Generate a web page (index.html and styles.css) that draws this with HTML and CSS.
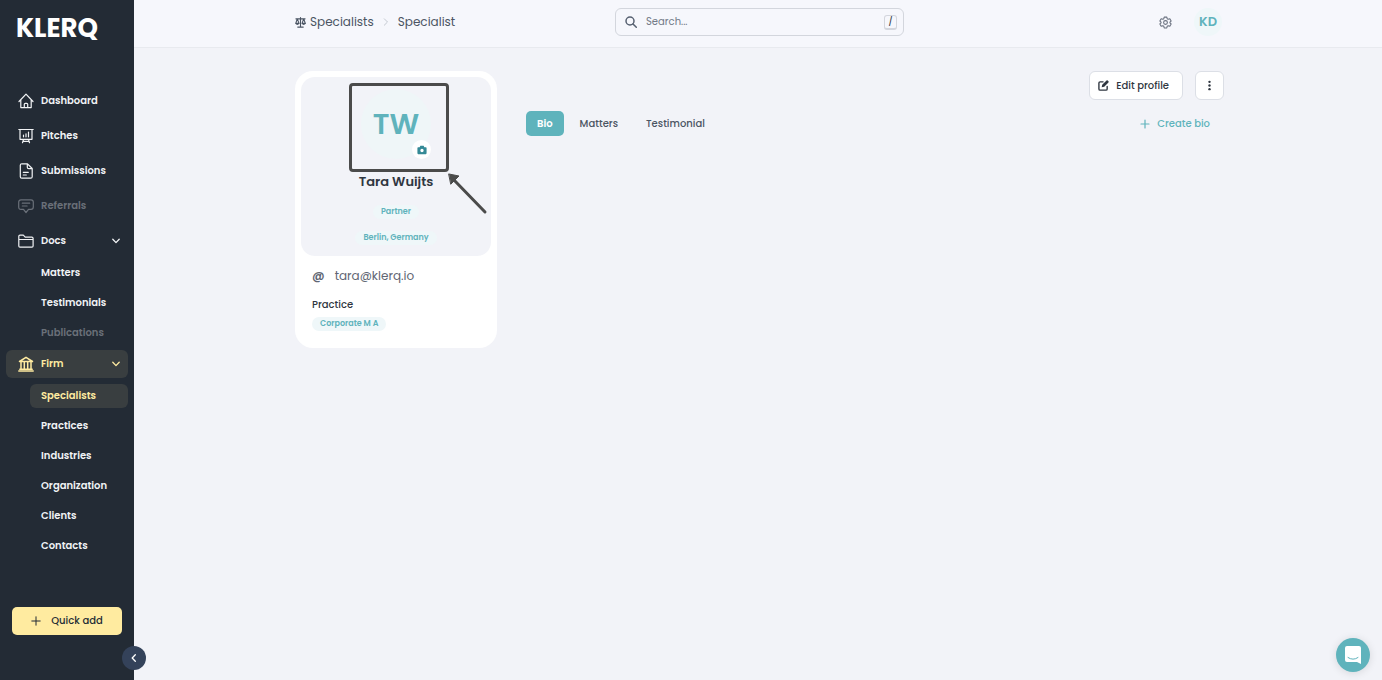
FILE: index.html
```html
<!DOCTYPE html>
<html lang="en">

<head>
    <meta charset="utf-8">
    <meta name="viewport" content="width=device-width, initial-scale=1.0">
    <title>Klerq - Specialist</title>
    <link rel="stylesheet" href="styles.css">
</head>

<body>
    <aside class="sidebar">
        <a class="logo" href="#">KLERQ</a>

        <nav class="menu">
            <a class="menu-item" href="#">
                <svg class="icon" viewBox="0 0 16 16"><path d="M1 8.5 8 1.2l7 7.3M2.8 7v7.6h10.4V7M6.3 14.5v-3.2q0-1 1-1h1.4q1 0 1 1v3.2" /></svg>
                Dashboard
            </a>
            <a class="menu-item" href="#">
                <svg class="icon" viewBox="0 0 16 16"><path d="M.8 1.5h14.4M2 1.5v9.8h12V1.5M5.5 8.8V7.2M8 8.8V5.8M10.5 8.8V4M5.5 11.5l-1 3.2M10.5 11.5l1 3.2M5 13.3h6" /></svg>
                Pitches
            </a>
            <a class="menu-item" href="#">
                <svg class="icon" viewBox="0 0 16 16"><path d="M3.8.8h5.7l4.7 4.7v8.2q0 1.5-1.5 1.5H3.8q-1.5 0-1.5-1.5V2.3Q2.3.8 3.8.8zM9.3.8v3.4q0 1.5 1.5 1.5h3.4M5.3 9.3h5M5.3 12h3" /></svg>
                Submissions
            </a>
            <a class="menu-item muted" href="#">
                <svg class="icon" viewBox="0 0 16 16"><path d="M3 1.8h10q2.3 0 2.3 2.3v5q0 2.3-2.3 2.3h-2.5L8 14.5l-2.5-3.1H3Q.7 11.4.7 9.1v-5Q.7 1.8 3 1.8zM4.3 5.2h7.4M4.3 8h4.8" /></svg>
                Referrals
            </a>

            <button class="menu-item" type="button">
                <svg class="icon" viewBox="0 0 16 16"><path d="M.8 13V3.3q0-1.2 1.2-1.2h3.3l1.9 2h6.6q1.3 0 1.3 1.3V13q0 1.2-1.2 1.2H2Q.8 14.2.8 13zM.8 6.5h14.3" /></svg>
                Docs
                <svg class="chevron" viewBox="0 0 8 8"><path d="M.8 2.3 4 5.6l3.2-3.3" /></svg>
            </button>
            <ul class="submenu">
                <li><a href="#">Matters</a></li>
                <li><a href="#">Testimonials</a></li>
                <li><a class="muted" href="#">Publications</a></li>
            </ul>

            <button class="menu-item active" type="button">
                <svg class="icon firm-icon" viewBox="0 0 16 16"><path d="M1.5 5.5 8 1.3l6.5 4.2zM3 6v7M6.3 6v7M9.7 6v7M13 6v7M1.8 13.2h12.4M.8 15h14.4" /></svg>
                Firm
                <svg class="chevron" viewBox="0 0 8 8"><path d="M.8 2.3 4 5.6l3.2-3.3" /></svg>
            </button>
            <ul class="submenu">
                <li><a class="active" href="#">Specialists</a></li>
                <li><a href="#">Practices</a></li>
                <li><a href="#">Industries</a></li>
                <li><a href="#">Organization</a></li>
                <li><a href="#">Clients</a></li>
                <li><a href="#">Contacts</a></li>
            </ul>
        </nav>

        <button class="quick-add" type="button">
            <svg viewBox="0 0 10 10"><path d="M5 .8v8.4M.8 5h8.4" /></svg>
            Quick add
        </button>
        <button class="collapse" type="button" aria-label="Collapse menu">
            <svg viewBox="0 0 8 8"><path d="M5.3.8 2.2 4l3.1 3.2" /></svg>
        </button>
    </aside>

    <div class="page">
        <header class="topbar">
            <div class="topbar-inner">
                <nav class="breadcrumb">
                    <a href="#">
                        <svg class="scales" viewBox="0 0 12 12"><path d="M1 2h10M6 .6v10.2M3 11h6M2.5 2 .8 7h3.6zM9.5 2 7.7 7h3.6zM.8 7q1.7 2 3.6 0M7.7 7q1.8 2 3.6 0" /></svg>
                        Specialists
                    </a>
                    <svg class="crumb-arrow" viewBox="0 0 8 8"><path d="M2.3.8 5.5 4 2.3 7.2" /></svg>
                    <span>Specialist</span>
                </nav>

                <label class="search">
                    <svg viewBox="0 0 12 12"><circle cx="5" cy="5" r="4" /><path d="m8 8 3.3 3.3" /></svg>
                    <input type="text" placeholder="Search..." aria-label="Search">
                    <kbd>/</kbd>
                </label>

                <div class="account">
                    <button class="settings" type="button" aria-label="Settings">
                        <svg viewBox="0 0 24 24"><path d="M9.6 2h4.8l.7 3 1.9 1.1 3-.9 2.4 4.2-2.2 2.1v1l2.2 2.1-2.4 4.2-3-.9-1.9 1.1-.7 3H9.6l-.7-3L7 17.9l-3 .9-2.4-4.2 2.2-2.1v-1L1.6 9.4 4 5.2l3 .9L8.9 5z" /><circle cx="12" cy="12" r="3.5" /></svg>
                    </button>
                    <button class="user" type="button">KD</button>
                </div>
            </div>
        </header>

        <main class="content">
            <section class="card">
                <div class="card-head">
                    <div class="avatar">
                        TW
                        <button class="camera" type="button" aria-label="Change picture">
                            <svg viewBox="0 0 12 12"><path fill-rule="evenodd" d="M4 1h4l.8 1.7h1.7q1 0 1 1V10q0 1-1 1h-9q-1 0-1-1V3.7q0-1 1-1h1.7zM6 4.6a2 2 0 1 0 0 4 2 2 0 0 0 0-4z" /></svg>
                        </button>
                        <span class="highlight"></span>
                        <svg class="arrow" viewBox="0 0 40 42"><path class="arrow-line" d="M37 39 6 7" /><path class="arrow-tip" d="M1 1l10 2-8 8z" /></svg>
                    </div>
                    <h1>Tara Wuijts</h1>
                    <span class="tag">Partner</span>
                    <span class="tag">Berlin, Germany</span>
                </div>
                <div class="card-body">
                    <a class="email" href="#"><span class="at">@</span>tara@klerq.io</a>
                    <h2>Practice</h2>
                    <span class="tag">Corporate M A</span>
                </div>
            </section>

            <section class="details">
                <div class="actions">
                    <button class="btn edit" type="button">
                        <svg viewBox="0 0 12 12"><path class="stroke" d="M5.5 2H2.3Q1 2 1 3.3v6.4Q1 11 2.3 11h6.4Q10 11 10 9.7V7" /><path d="M9.3.6q.7-.5 1.3 0l.8.8q.6.7 0 1.3L6.8 7.4 4 8l.6-2.8z" /></svg>
                        Edit profile
                    </button>
                    <button class="btn more" type="button" aria-label="More">
                        <svg viewBox="0 0 12 12"><circle cx="6" cy="2" r="1.3" /><circle cx="6" cy="6" r="1.3" /><circle cx="6" cy="10" r="1.3" /></svg>
                    </button>
                </div>
                <div class="tab-row">
                    <button class="tab selected" type="button">Bio</button>
                    <button class="tab" type="button">Matters</button>
                    <button class="tab" type="button">Testimonial</button>
                    <button class="create" type="button">
                        <svg viewBox="0 0 10 10"><path d="M5 1v8M1 5h8" /></svg>
                        Create bio
                    </button>
                </div>
            </section>
        </main>
    </div>

    <button class="chat" type="button" aria-label="Open chat">
        <svg viewBox="0 0 18 20"><path class="bubble" d="M3 1h12q2 0 2 2v16l-4-2H3q-2 0-2-2V3q0-2 2-2z" /><path class="smile" d="M4 12.5q5 3.5 10 0" /></svg>
    </button>
</body>

</html>
```

FILE: styles.css
```css
* {
    box-sizing: border-box;
}

body {
    display: grid;
    grid-template-columns: 134px 1fr;
    min-height: 100vh;
    margin: 0;
    background-color: #f2f3f8;
    color: #2f3640;
    font-family: Poppins, Inter, sans-serif;
    font-size: 10px;
    font-weight: 500;
}

a {
    color: inherit;
    text-decoration: none;
}

button {
    padding: 0;
    border: none;
    background: none;
    color: inherit;
    font: inherit;
    cursor: pointer;
}

svg {
    flex: none;
    fill: none;
    stroke: currentColor;
    stroke-linecap: round;
    stroke-linejoin: round;
}

/* Sidebar */
.sidebar {
    position: relative;
    display: flex;
    flex-direction: column;
    padding: 14px 6px 45px;
    background-color: #232b35;
    color: #f1f3f5;
}

.logo {
    margin-left: 10px;
    color: #fff;
    font-size: 26px;
    font-weight: 700;
    line-height: 28px;
}

.menu {
    display: flex;
    flex-direction: column;
    gap: 7px;
    margin-top: 45px;
    font-weight: 600;
}

.menu-item {
    display: flex;
    align-items: center;
    gap: 7px;
    height: 28px;
    padding: 0 8px 0 12px;
    border-radius: 6px;
}

.icon {
    width: 16px;
    height: 16px;
    stroke-width: 1.2;
}

.firm-icon {
    stroke-width: 1.5;
}

.chevron {
    width: 8px;
    height: 8px;
    margin-left: auto;
    stroke-width: 1.3;
}

.submenu {
    display: flex;
    flex-direction: column;
    gap: 6px;
    margin: -1px 0 -2px 24px;
    padding: 0;
    list-style: none;
}

.submenu a {
    display: block;
    padding-left: 11px;
    border-radius: 6px;
    line-height: 24px;
}

.muted {
    color: #6a7079;
}

.active {
    background-color: #393e40;
    color: #ffeba0;
}

.quick-add {
    display: flex;
    align-items: center;
    justify-content: center;
    gap: 10px;
    height: 28px;
    margin: auto 6px 0;
    border-radius: 5px;
    background-color: #ffeba0;
    color: #232b35;
}

.quick-add svg,
.create svg {
    width: 10px;
    height: 10px;
}

.create svg {
    stroke-width: 1.2;
}

.collapse {
    position: absolute;
    right: -12px;
    bottom: 10px;
    display: grid;
    place-items: center;
    width: 24px;
    height: 24px;
    border-radius: 50%;
    background-color: #34425a;
    color: #fff;
}

.collapse svg {
    width: 8px;
    height: 8px;
    stroke-width: 1.3;
}

/* Top bar */
.topbar {
    padding: 8px 0 11px;
    border-bottom: 1px solid #e8eaef;
    background-color: #f6f7fc;
}

.topbar-inner,
.content {
    max-width: 932px;
    margin: 0 auto;
    padding-left: 3px;
}

.topbar-inner {
    display: grid;
    grid-template-columns: 1fr 289px 1fr;
    align-items: center;
    height: 28px;
}

.breadcrumb {
    display: flex;
    align-items: center;
    gap: 8px;
    color: #4b5563;
    font-size: 12px;
    font-weight: 400;
}

.breadcrumb a {
    display: flex;
    align-items: center;
    gap: 4px;
}

.scales {
    width: 11px;
    height: 11px;
    stroke-width: 1.2;
}

.crumb-arrow {
    width: 8px;
    height: 8px;
    color: #c3c8d0;
}

.search {
    display: flex;
    align-items: center;
    gap: 9px;
    height: 28px;
    padding: 0 6px 0 9px;
    border: 1px solid #d3d6dd;
    border-radius: 6px;
    color: #566070;
}

.search svg {
    width: 12px;
    height: 12px;
    stroke-width: 1.5;
}

.search input {
    flex: 1;
    min-width: 0;
    padding: 0;
    border: none;
    outline: none;
    background: none;
    font: inherit;
    font-weight: 400;
}

.search input::placeholder {
    color: #737b88;
}

.search kbd {
    width: 13px;
    border: 1px solid #d3d6dd;
    border-bottom-width: 2px;
    border-radius: 3px;
    color: #2f3640;
    font-family: inherit;
    font-size: 8px;
    line-height: 12px;
    text-align: center;
}

.account {
    display: flex;
    align-items: center;
    justify-content: flex-end;
    gap: 22px;
    padding-right: 2px;
}

.settings {
    display: flex;
    color: #6b7280;
}

.settings svg {
    width: 13px;
    height: 13px;
    stroke-width: 2;
}

.user {
    width: 28px;
    height: 28px;
    border-radius: 50%;
    background-color: #eff7f9;
    color: #5fb3bc;
    font-size: 13px;
    font-weight: 600;
}

/* Profile */
.content {
    display: flex;
    align-items: flex-start;
    gap: 29px;
    padding-top: 23px;
}

.card {
    flex: none;
    width: 202px;
    padding: 6px;
    border-radius: 18px;
    background-color: #fff;
}

.card-head {
    display: flex;
    flex-direction: column;
    align-items: center;
    padding: 12px 0 11px;
    border-radius: 14px;
    background-color: #f2f3f8;
}

.avatar {
    position: relative;
    display: grid;
    place-items: center;
    width: 70px;
    height: 70px;
    border-radius: 50%;
    background-color: #eff6f8;
    color: #5fb3bc;
    font-size: 29px;
    font-weight: 600;
}

.camera {
    position: absolute;
    right: 0;
    bottom: 0;
    display: grid;
    place-items: center;
    width: 19px;
    height: 19px;
    border-radius: 50%;
    background-color: #fff;
    color: #348996;
}

.camera svg {
    width: 10px;
    height: 10px;
    fill: currentColor;
    stroke: none;
}

/* Marker around the picture */
.highlight {
    position: absolute;
    top: -6px;
    left: -12px;
    width: 100px;
    height: 89px;
    border: 3px solid #4b4b4b;
    border-radius: 4px;
}

.arrow {
    position: absolute;
    top: 84px;
    left: 87px;
    width: 40px;
    height: 42px;
    color: #4b4b4b;
}

.arrow-line {
    stroke-width: 3;
}

.arrow-tip {
    fill: currentColor;
}

h1 {
    margin: 13px 0;
    font-size: 13px;
    font-weight: 600;
    line-height: 20px;
}

.tag {
    padding: 0 8px;
    border-radius: 8px;
    background-color: #eff7f9;
    color: #5fb3bc;
    font-size: 8px;
    font-weight: 600;
    line-height: 14px;
}

.tag + .tag {
    margin-top: 12px;
}

.card-body {
    display: flex;
    flex-direction: column;
    align-items: flex-start;
    padding: 10px 11px 11px;
}

.email {
    display: flex;
    align-items: center;
    gap: 10px;
    color: #5f6673;
    font-size: 12px;
    font-weight: 400;
    line-height: 20px;
}

.at {
    font-weight: 600;
}

h2 {
    margin: 10px 0 3px;
    font-size: 10px;
    font-weight: 500;
    line-height: 18px;
}

.details {
    flex: 1;
}

.actions {
    display: flex;
    justify-content: flex-end;
    gap: 12px;
}

.btn {
    display: flex;
    align-items: center;
    justify-content: center;
    gap: 7px;
    height: 29px;
    border: 1px solid #dcdfe6;
    border-radius: 6px;
    background-color: #fff;
}

.btn svg {
    width: 11px;
    height: 11px;
    fill: currentColor;
    stroke: none;
}

.btn .stroke {
    fill: none;
    stroke: currentColor;
    stroke-width: 1.5;
}

.edit {
    padding: 0 13px 0 8px;
}

.more {
    width: 29px;
}

.tab-row {
    display: flex;
    align-items: center;
    gap: 4px;
    margin-top: 11px;
}

.tab {
    height: 25px;
    padding: 0 11px;
    border-radius: 5px;
    color: #4b5563;
}

.tab + .tab {
    padding: 0 12px;
}

.tab.selected {
    background-color: #5fb3bc;
    color: #fff;
    font-weight: 600;
}

.create {
    display: flex;
    align-items: center;
    gap: 7px;
    margin-left: auto;
    padding-right: 14px;
    color: #5fb3bc;
}

/* Chat launcher */
.chat {
    position: fixed;
    right: 12px;
    bottom: 8px;
    display: grid;
    place-items: center;
    width: 34px;
    height: 34px;
    border-radius: 50%;
    background-color: #5fb3bc;
    box-shadow: 0 1px 8px rgba(0, 0, 0, 0.12);
}

.chat svg {
    width: 18px;
    height: 20px;
    stroke: none;
}

.bubble {
    fill: #fff;
}

.chat .smile {
    stroke: #5fb3bc;
}
```
